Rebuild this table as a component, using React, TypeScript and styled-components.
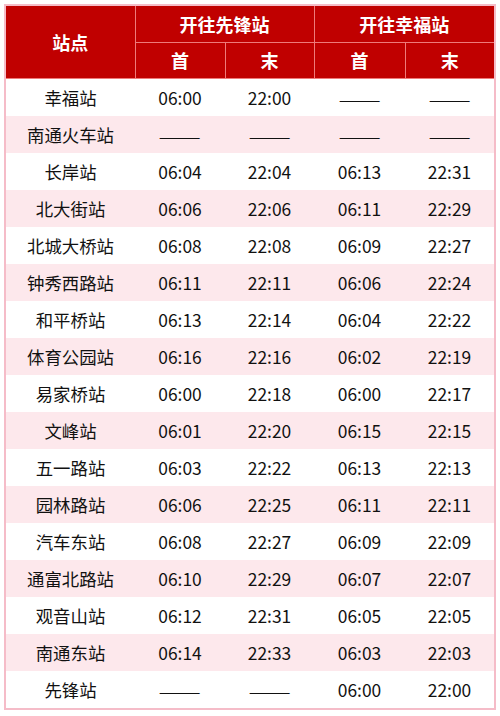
import React from "react";
import styled, { createGlobalStyle } from "styled-components";

const GlobalStyle = createGlobalStyle`
  html, body {
    margin: 0;
    padding: 0;
    background: #ffffff;
  }
  body {
    font-family: "Noto Sans CJK SC", "Noto Sans", sans-serif;
  }
`;

const Page = styled.div`
  padding: 4px 6px 4px 4px;
`;

const Table = styled.table`
  width: 490px;
  border-collapse: collapse;
  table-layout: fixed;
  border: 2px solid #f5bcc8;
`;

const HeadCell = styled.th`
  background: #c00000;
  color: #ffffff;
  font-size: 18px;
  font-weight: 700;
  height: 35.5px;
  padding: 0;
  text-align: center;
  border: 1px solid #ee7a7a;
  border-top: none;
`;

const Row = styled.tr<{ $alt: boolean }>`
  background: ${(p) => (p.$alt ? "#fde8ec" : "#ffffff")};
`;

const Cell = styled.td`
  height: 37px;
  padding: 0;
  text-align: center;
  font-size: 17.4px;
  color: #111111;
`;

const Dash = styled.span`
  display: inline-block;
  transform: scaleX(1.45) translateY(1px);
`;

const rows: string[][] = [
  ["幸福站", "06:00", "22:00", "——", "——"],
  ["南通火车站", "——", "——", "——", "——"],
  ["长岸站", "06:04", "22:04", "06:13", "22:31"],
  ["北大街站", "06:06", "22:06", "06:11", "22:29"],
  ["北城大桥站", "06:08", "22:08", "06:09", "22:27"],
  ["钟秀西路站", "06:11", "22:11", "06:06", "22:24"],
  ["和平桥站", "06:13", "22:14", "06:04", "22:22"],
  ["体育公园站", "06:16", "22:16", "06:02", "22:19"],
  ["易家桥站", "06:00", "22:18", "06:00", "22:17"],
  ["文峰站", "06:01", "22:20", "06:15", "22:15"],
  ["五一路站", "06:03", "22:22", "06:13", "22:13"],
  ["园林路站", "06:06", "22:25", "06:11", "22:11"],
  ["汽车东站", "06:08", "22:27", "06:09", "22:09"],
  ["通富北路站", "06:10", "22:29", "06:07", "22:07"],
  ["观音山站", "06:12", "22:31", "06:05", "22:05"],
  ["南通东站", "06:14", "22:33", "06:03", "22:03"],
  ["先锋站", "——", "——", "06:00", "22:00"],
];

export default function App() {
  return (
    <Page>
      <GlobalStyle />
      <Table>
        <colgroup>
          <col style={{ width: 130 }} />
          <col style={{ width: 90 }} />
          <col style={{ width: 89 }} />
          <col style={{ width: 91 }} />
          <col style={{ width: 90 }} />
        </colgroup>
        <thead>
          <tr>
            <HeadCell rowSpan={2}>站点</HeadCell>
            <HeadCell colSpan={2}>开往先锋站</HeadCell>
            <HeadCell colSpan={2}>开往幸福站</HeadCell>
          </tr>
          <tr>
            <HeadCell>首</HeadCell>
            <HeadCell>末</HeadCell>
            <HeadCell>首</HeadCell>
            <HeadCell>末</HeadCell>
          </tr>
        </thead>
        <tbody>
          {rows.map((r, i) => (
            <Row key={r[0]} $alt={i % 2 === 1}>
              {r.map((v, j) => (
                <Cell key={j}>{v === "——" ? <Dash>{v}</Dash> : v}</Cell>
              ))}
            </Row>
          ))}
        </tbody>
      </Table>
    </Page>
  );
}
